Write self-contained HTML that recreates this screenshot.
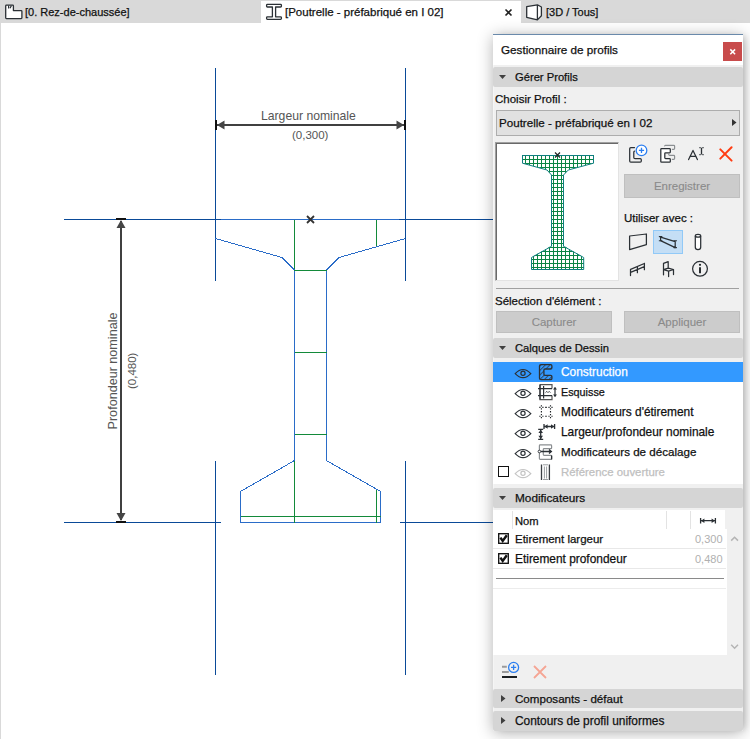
<!DOCTYPE html>
<html><head><meta charset="utf-8">
<style>
*{margin:0;padding:0;box-sizing:border-box}
html,body{width:750px;height:739px;overflow:hidden;background:#fff;font-family:"Liberation Sans",sans-serif;font-size:12px;color:#111}
.a{position:absolute}
.t{position:absolute;white-space:nowrap;line-height:14px;font-size:12px;-webkit-text-stroke:0.25px currentColor}
svg{position:absolute;left:0;top:0}
</style></head><body>
<!-- tab bar -->
<div class="a" style="left:0;top:0;width:750px;height:23px;background:#d9d9d9"></div>
<div class="a" style="left:261px;top:1px;width:260px;height:22px;background:#fff"></div>
<div class="a" style="left:0;top:23px;width:1px;height:716px;background:#d9d9d9"></div>
<div class="t" style="left:25px;top:5px;font-size:11px">[0. Rez-de-chaussée]</div>
<div class="t" style="left:285px;top:5px;font-size:11.5px">[Poutrelle - préfabriqué en I 02]</div>
<div class="t" style="left:546px;top:5px;font-size:11px">[3D / Tous]</div>


<!-- tab icons -->
<svg class="a" style="left:0;top:0" width="550" height="23">
 <g fill="#fff" stroke="#2b3035" stroke-width="1.3" stroke-linejoin="round">
  <path d="M6.4 5.2Q5.7 5.2 5.7 5.9V17.8Q5.7 18.6 6.4 18.6H21.2Q21.9 18.6 21.9 17.8V11.4Q21.9 10.6 21.2 10.6H13.4V5.9Q13.4 5.2 12.7 5.2Z"/>
  <path d="M267.4 4.4H280.6Q281.4 4.4 281.4 5.2V6.2Q281.4 7 280.6 7H275.6V16.8H280.6Q281.4 16.8 281.4 17.6V18.6Q281.4 19.4 280.6 19.4H267.4Q266.6 19.4 266.6 18.6V17.6Q266.6 16.8 267.4 16.8H272.4V7H267.4Q266.6 7 266.6 6.2V5.2Q266.6 4.4 267.4 4.4Z"/>
  <path d="M526.7 6.6L537.4 4.8L541.4 7V15.8L537.4 19.9L526.7 17.3Z M537.4 4.8V19.9"/>
 </g>
 <path d="M8.6 5.5V8.6M11.4 5.6L10 8.2" stroke="#2b3035" stroke-width="1.2" fill="none"/>
 <path d="M505.5 9.5L511.5 15.5M511.5 9.5L505.5 15.5" stroke="#222" stroke-width="1.6"/>
</svg>

<!-- drawing -->
<svg width="750" height="739" viewBox="0 0 750 739">
 <g fill="none" stroke-width="1" shape-rendering="crispEdges">
  <!-- beam outline -->
  <g stroke="#2a6cc8">
   <path d="M215.5 219.5H405.5V238.5M215.5 219.5V238.5M326.5 269.5V460.5M294.5 269.5V460.5M380.5 490.5V522.5H240.5V490.5"/>
  </g>
  <g stroke="#138a3a">
   <path d="M294.5 219.5V270.5H326.5M376.5 219.5V246.5M294.5 352.5H326.5M294.5 434.5H326.5M294.5 460.5V522.5M240.5 516.5H380.5M376.5 489.5V522.5"/>
  </g>
  <g stroke="#0a4a98">
   <path d="M215.5 68V281M215.5 461V675M405.5 68V281M405.5 461V675M64 219.5H221M399 219.5H493M64 522.5H221M400 522.5H493"/>
  </g>
  <g stroke="#404040" stroke-width="2">
   <path d="M217 125H404M121 221V520"/>
  </g>
 </g>
 <g fill="none" stroke="#2a6cc8" stroke-width="1" shape-rendering="crispEdges">
  <path d="M215.5 238.5L282 257.5L294.5 270M405.5 238.5L339 257.5L326.5 270M294.5 460.5L240.5 491.5M326.5 460.5L380.5 491.5"/>
 </g>
 <!-- arrowheads -->
 <g fill="#454545">
  <path d="M217 125L224.5 120.5V129.5Z M404 125L396.5 120.5V129.5Z M121 220L116.5 228H125.5Z M121 521L116.5 513H125.5Z"/>
 </g>
 <g fill="#111">
  <rect x="215" y="120" width="2" height="10"/><rect x="404" y="120" width="2" height="10"/>
  <rect x="116" y="218" width="10" height="2"/><rect x="116" y="521" width="10" height="2"/>
 </g>
 <!-- center mark -->
 <g stroke="#333" stroke-width="1.8">
  <path d="M307 216L314 223M314 216L307 223"/>
 </g>
</svg>
<div class="t" style="left:261px;top:109px;color:#555;font-size:12.2px;-webkit-text-stroke:0">Largeur nominale</div>
<div class="t" style="left:292px;top:128px;color:#555;font-size:11.5px;-webkit-text-stroke:0">(0,300)</div>
<div class="t" style="left:54px;top:364px;width:117px;text-align:center;color:#555;font-size:12.6px;-webkit-text-stroke:0;transform:rotate(-90deg)">Profondeur nominale</div>
<div class="t" style="left:114px;top:364px;width:36px;text-align:center;color:#555;font-size:11.5px;-webkit-text-stroke:0;transform:rotate(-90deg)">(0,480)</div>

<!-- panel -->
<div class="a" style="left:493px;top:34px;width:250px;height:697px;background:#f0f0f0;box-shadow:0 2px 15px rgba(0,0,0,0.3),4px 0 6px -2px rgba(0,0,0,0.14)"></div>
<div class="a" style="left:493px;top:65px;width:1px;height:666px;background:#f5f5f5"></div>
<div class="a" style="left:493px;top:34px;width:250px;height:1px;background:#6a8aab"></div>
<div class="a" style="left:493px;top:35px;width:250px;height:30px;background:#fff"></div>
<div class="t" style="left:501px;top:43px;font-size:11.7px">Gestionnaire de profils</div>

<div class="a" style="left:723px;top:42px;width:19px;height:19px;background:#c84b4b"></div>
<svg class="a" style="left:723px;top:42px" width="19" height="19"><path d="M7.3 7.4L12.1 12.2M12.1 7.4L7.3 12.2" stroke="#fff" stroke-width="1.5"/></svg>

<!-- Gerer Profils header -->
<div class="a" style="left:493px;top:67px;width:250px;height:20px;background:#d5d5d5;border-radius:2px"></div>
<svg class="a" style="left:499px;top:75px" width="8" height="5"><path d="M0 0H7L3.5 4Z" fill="#404040"/></svg>
<div class="t" style="left:515px;top:70px;font-size:11.2px">Gérer Profils</div>
<div class="t" style="left:495px;top:92px;font-size:11.5px">Choisir Profil :</div>
<!-- dropdown -->
<div class="a" style="left:496px;top:110px;width:244px;height:26px;background:#e1e1e1;border:1px solid #adadad"></div>
<div class="t" style="left:499px;top:116px;font-size:11.6px">Poutrelle - préfabriqué en I 02</div>
<svg class="a" style="left:732px;top:119px" width="6" height="8"><path d="M0 0L4.5 3.5L0 7Z" fill="#333"/></svg>
<!-- preview -->
<div class="a" style="left:495px;top:142px;width:124px;height:139px;background:#fff;border-top:1px solid #a0a0a0;border-left:1px solid #a0a0a0;border-right:1px solid #e3e3e3;border-bottom:1px solid #e3e3e3;box-shadow:inset 1px 1px 0 #696969"></div>


<svg class="a" style="left:0;top:0" width="750" height="300">
 <defs>
  <pattern id="grid" patternUnits="userSpaceOnUse" x="1" y="3" width="4" height="4">
   <rect x="0" y="0" width="4" height="1" fill="#0b8444"/><rect x="0" y="0" width="1" height="4" fill="#0b8444"/>
  </pattern>
  <clipPath id="bclip"><path d="M522 155H594V163L568.3 169.8L564 174.5V246L584 257.5V270H531V257.5L551 246V174.5L547 169.8L522 163Z"/></clipPath>
 </defs>
 <rect x="520" y="150" width="80" height="125" fill="url(#grid)" clip-path="url(#bclip)"/>
 <path d="M522.5 155.5H593.5V163.2L568.3 170L563.5 175V246.3L583.7 257.5V269.5H531.5V257.5L551.5 246.3V175L547 170L522.5 163.2Z" fill="none" stroke="#0f7f80" stroke-width="1"/>
 <path d="M555 152.5L560 157.5M560 152.5L555 157.5" stroke="#222" stroke-width="1.2"/>
</svg>

<!-- Enregistrer -->
<div class="a" style="left:624px;top:174px;width:116px;height:24px;background:#cccccc;border:1px solid #bfbfbf"></div>
<div class="t" style="left:624px;top:179px;width:116px;text-align:center;color:#8a8a8a;font-size:11.5px;-webkit-text-stroke:0.1px #8a8a8a">Enregistrer</div>
<div class="t" style="left:624px;top:211px;font-size:11.5px">Utiliser avec :</div>
<div class="a" style="left:653px;top:230px;width:30px;height:24px;background:#c4def5;border:1px solid #91c9f7"></div>

<!-- toolbar icons -->
<svg class="a" style="left:0;top:0" width="750" height="290">
 <g fill="none" stroke="#2b3035" stroke-width="1.25" stroke-linejoin="round" stroke-linecap="round">
  <path d="M634.5 147.6H630.8Q629.7 147.6 629.7 148.7V161Q629.7 162.2 630.8 162.2H640.2Q641.3 162.2 641.3 161V159.8Q641.3 158.6 640.2 158.6H635Q633.8 158.6 633.8 157.4V152.2Q633.8 151.2 634.6 151.1"/>
  <path d="M661.6 148.7H669.5Q670.3 148.7 670.3 149.5V152Q670.3 152.8 669.5 152.8H665.6Q664.8 152.8 664.8 153.6V157.8Q664.8 158.6 665.6 158.6H669.5Q670.3 158.6 670.3 159.4V161.4Q670.3 162.2 669.5 162.2H661.6Q660.8 162.2 660.8 161.4V149.5Q660.8 148.7 661.6 148.7Z" fill="#fff"/>
  <path d="M688.6 159.6L693 150.4L697.4 159.6M689.9 156.4H696.1"/>
  <path d="M701.5 147.8V154.4M699.4 147.6H700.6M702.4 147.6H703.6M699.4 154.6H700.6M702.4 154.6H703.6" stroke-linecap="butt" stroke-width="1.3"/>
 </g>
 <path d="M664.7 145.9Q664.9 145.3 665.6 145.3H673.8Q674.6 145.3 674.6 146.1V148.5Q674.6 149.3 673.8 149.3H672.4M668.7 154.4Q668.9 155.4 669.7 155.4H673.8Q674.6 155.4 674.6 156.2V158.6Q674.6 159.4 673.8 159.4H672.4" fill="none" stroke="#8b8f92" stroke-width="1.2" stroke-linecap="round"/>
 <circle cx="641.5" cy="150.4" r="5.3" fill="#fff" stroke="#2c7ff0" stroke-width="1.3"/>
 <path d="M638.9 150.4H644.1M641.5 147.8V153" stroke="#2c7ff0" stroke-width="1.3"/>
 <path d="M720.3 149.4L731.6 160.6M720.3 158.6L731.6 147.3" stroke="#ff3c12" stroke-width="2" stroke-linecap="round"/>
 <!-- use-with icons -->
 <g fill="none" stroke="#2b3035" stroke-width="1.25" stroke-linejoin="round" stroke-linecap="round">
  <path d="M629.6 236L646.4 234V244.6L629.6 249.6Z"/>
  <path d="M660.6 237.2L675.2 241.6V247.6L660.6 240.6Z"/>
  <path d="M659.3 236.6H661.9M659.3 240.8H661.9M673.9 240.8H676.5M673.9 247.6H676.5" stroke-width="1.1"/>
  <path d="M695.3 236.3V247.2Q695.3 249.6 698 249.6Q700.7 249.6 700.7 247.2V236.3" fill="#fff"/>
  <ellipse cx="698" cy="235.8" rx="2.7" ry="1.4" fill="#fff"/>
  <path d="M630.5 275.6V269.3M637.4 272.7V266.5M644.4 269.7V263.3M630.6 269.4L644.3 263.5M630.6 272.4L644.3 266.6"/>
  <path d="M663.5 274.8V263.4L668.2 261.6V268.2M663.5 269.6L668.3 268.2L673.5 269.5L668.6 271.1ZM668.6 271.1V276.6M673.5 269.5V274.6"/>
  <circle cx="700" cy="268.8" r="7.4"/>
 </g>
 <path d="M700 267.3V273.3" stroke="#1e2326" stroke-width="1.9"/>
 <circle cx="700" cy="264.8" r="1.1" fill="#1e2326"/>
</svg>

<!-- separator -->
<div class="a" style="left:496px;top:288px;width:243px;height:1px;background:#a0a0a0"></div>
<div class="t" style="left:495px;top:294px;font-size:11.5px">Sélection d'élément :</div>
<div class="a" style="left:496px;top:311px;width:116px;height:22px;background:#cccccc;border:1px solid #bfbfbf"></div>
<div class="t" style="left:496px;top:315px;width:116px;text-align:center;color:#8a8a8a;font-size:11.5px;-webkit-text-stroke:0.1px #8a8a8a">Capturer</div>
<div class="a" style="left:624px;top:311px;width:116px;height:22px;background:#cccccc;border:1px solid #bfbfbf"></div>
<div class="t" style="left:624px;top:315px;width:116px;text-align:center;color:#8a8a8a;font-size:11.5px;-webkit-text-stroke:0.1px #8a8a8a">Appliquer</div>

<!-- Calques header -->
<div class="a" style="left:493px;top:338px;width:250px;height:20px;background:#d5d5d5;border-radius:2px"></div>
<svg class="a" style="left:499px;top:346px" width="8" height="5"><path d="M0 0H7L3.5 4Z" fill="#404040"/></svg>
<div class="t" style="left:515px;top:341px;font-size:11.2px">Calques de Dessin</div>
<!-- list -->
<div class="a" style="left:493px;top:362px;width:250px;height:122px;background:#fff"></div>
<div class="a" style="left:493px;top:362px;width:250px;height:20px;background:#3399ff"></div>
<div class="t" style="left:561px;top:365px;color:#fff;font-size:11.9px">Construction</div>
<div class="t" style="left:561px;top:385px;font-size:10.8px">Esquisse</div>
<div class="t" style="left:561px;top:405px;font-size:11.9px">Modificateurs d'étirement</div>
<div class="t" style="left:561px;top:425px;font-size:11.9px">Largeur/profondeur nominale</div>
<div class="t" style="left:561px;top:445px;font-size:11.6px">Modificateurs de décalage</div>
<div class="t" style="left:561px;top:465px;color:#c0c0c0;font-size:11.4px">Référence ouverture</div>
<div class="a" style="left:498px;top:466px;width:11px;height:11px;border:1.5px solid #111;background:#fff"></div>


<!-- layer icons -->
<svg class="a" style="left:0;top:0;z-index:5" width="750" height="739">
 <g fill="none" stroke="#2b3035" stroke-width="1.2">
  <g id="eye"><path d="M515.2 373.6Q523 365.4 530.8 373.6Q523 381.8 515.2 373.6Z"/><circle cx="523" cy="373.2" r="2.1"/></g>
  <path d="M515.2 393.6Q523 385.4 530.8 393.6Q523 401.8 515.2 393.6Z"/><circle cx="523" cy="393.2" r="2.1"/>
  <path d="M515.2 413.6Q523 405.4 530.8 413.6Q523 421.8 515.2 413.6Z"/><circle cx="523" cy="413.2" r="2.1"/>
  <path d="M515.2 433.6Q523 425.4 530.8 433.6Q523 441.8 515.2 433.6Z"/><circle cx="523" cy="433.2" r="2.1"/>
  <path d="M515.2 453.6Q523 445.4 530.8 453.6Q523 461.8 515.2 453.6Z"/><circle cx="523" cy="453.2" r="2.1"/>
 </g>
 <g fill="none" stroke="#c4c4c4" stroke-width="1.2">
  <path d="M515.2 473.6Q523 465.4 530.8 473.6Q523 481.8 515.2 473.6Z"/><circle cx="523" cy="473.2" r="2.1"/>
 </g>
 <!-- construction C -->
 <defs>
  <pattern id="hatch" patternUnits="userSpaceOnUse" width="3.2" height="4" patternTransform="rotate(45)">
   <rect x="0" y="0" width="1" height="4" fill="#2b3035"/>
  </pattern>
 </defs>
 <path d="M541 364.6H550.6Q551.9 364.6 551.9 365.9V367.7Q551.9 369 550.6 369H545Q543.9 369 543.9 370.1V374.2Q543.9 375.3 545 375.3H550.6Q551.9 375.3 551.9 376.6V378.4Q551.9 379.7 550.6 379.7H541Q539.5 379.7 539.5 378.2V366.1Q539.5 364.6 541 364.6Z" fill="url(#hatch)" fill-opacity="0.75" stroke="#2b3035" stroke-width="1.3"/>
 <!-- esquisse -->
 <g fill="none" stroke="#2b3035" stroke-width="1.2">
  <path d="M540 384.6H552V388.6M552 395.6V399.6H540V384.6" stroke="#555"/>
  <path d="M538 388.6H552M538 395.6H552M540 384.6V399.6M543.6 386V398.4"/>
  <path d="M545.5 392.6L546.8 391.4L548 392.6L549.2 391.4L550.4 392.6" stroke-width="0.9"/>
  <path d="M555 387.6V396.4"/>
 </g>
 <path d="M553 389.4L555 387L557 389.4ZM553 394.6L555 397L557 394.6Z" fill="#2b3035"/>
 <!-- modif etirement -->
 <g stroke="#1f2326" stroke-width="1.15" fill="none">
  <path d="M541.4 405.2V406.4M541.4 408.2V409.4M539.3 407.3H540.5M542.3 407.3H543.5M550.5 405.2V406.4M550.5 408.2V409.4M548.4 407.3H549.6M551.4 407.3H552.6M541.4 414.1V415.3M541.4 417.1V418.3M539.3 416.2H540.5M542.3 416.2H543.5M550.5 414.1V415.3M550.5 417.1V418.3M548.4 416.2H549.6M551.4 416.2H552.6"/>
  <path d="M545.2 407.3H546.8M545.2 416.2H546.8M541.4 411V412.6M550.5 411V412.6"/>
 </g>
 <!-- largeur/profondeur -->
 <g stroke="#2b3035" stroke-width="1.3" fill="none">
  <path d="M544 424V429M554.6 424V429M544 426.5H554.6M538.2 429.3H543.2M540.7 429.3V439.2M538.2 439.4H543.2"/>
 </g>
 <path d="M544.5 426.5L547.6 424.2V428.8ZM554.1 426.5L551 424.2V428.8ZM540.7 429.8L538.4 433H543ZM540.7 439L538.4 435.8H543Z" fill="#2b3035"/>
 <!-- decalage -->
 <path d="M540.2 444.9H550.8Q551.6 444.9 551.6 445.7V447.9Q551.6 448.7 550.8 448.7H544.1Q543.3 448.7 543.3 449.5V454.6Q543.3 455.4 544.1 455.4H550.8Q551.6 455.4 551.6 456.2V458.5Q551.6 459.3 550.8 459.3H540.2Q539.4 459.3 539.4 458.5V445.7Q539.4 444.9 540.2 444.9Z" fill="none" stroke="#8a8e91" stroke-width="1.2"/>
 <path d="M540.6 451.5H551.2M549 449.4L551.4 451.5L549 453.6M551.6 455.6V459.6" fill="none" stroke="#2b3035" stroke-width="1.3"/>
 <circle cx="539.4" cy="451.5" r="1.3" fill="#fff" stroke="#2b3035" stroke-width="0.9"/>
 <!-- reference ouverture -->
 <path d="M541.5 464.5V480M549.4 464.5V480" stroke="#3a3f43" stroke-width="1.3" fill="none"/>
 <path d="M544.4 466.5V478.5M546.6 466.5V478.5M543 464.8H548M543 479.5H548" stroke="#9a9ea1" stroke-width="1" fill="none"/>
 <!-- table checkboxes -->
 <rect x="498.7" y="533.7" width="9.6" height="9.6" fill="#fff" stroke="#111" stroke-width="1.35"/>
 <path d="M500.4 537.6L502.7 541L506.8 535.2" fill="none" stroke="#111" stroke-width="2.4"/>
 <rect x="498.7" y="553.7" width="9.6" height="9.6" fill="#fff" stroke="#111" stroke-width="1.35"/>
 <path d="M500.4 557.6L502.7 561L506.8 555.2" fill="none" stroke="#111" stroke-width="2.4"/>
 <!-- header arrow -->
 <path d="M700.6 518V523.4M715.4 518V523.4M701 520.7H715" stroke="#2b3035" stroke-width="1.3" fill="none"/>
 <path d="M701 520.7L704.4 518.4V523ZM715 520.7L711.6 518.4V523Z" fill="#2b3035"/>
 <!-- scroll chevrons -->
 <path d="M731.2 540.6L734.6 537.2L738 540.6" fill="none" stroke="#b4b4b4" stroke-width="1.5"/>
 <path d="M731.2 644.8L734.6 648.2L738 644.8" fill="none" stroke="#b4b4b4" stroke-width="1.5"/>
 <!-- bottom toolbar -->
 <path d="M502 666.8H506.8M502 672H508.8" stroke="#9a9a9a" stroke-width="2"/>
 <path d="M502 677H517" stroke="#1b1f22" stroke-width="2"/>
 <circle cx="513.6" cy="667.4" r="5" fill="#f0f0f0" stroke="#2c7ff0" stroke-width="1.3"/>
 <path d="M511 667.4H516.2M513.6 664.8V670" stroke="#2c7ff0" stroke-width="1.3"/>
 <path d="M534 666L546 678M534 678L546 666" stroke="#f5a594" stroke-width="1.8"/>
</svg>

<!-- Modificateurs header -->
<div class="a" style="left:493px;top:488px;width:250px;height:20px;background:#d5d5d5;border-radius:2px"></div>
<svg class="a" style="left:499px;top:496px" width="8" height="5"><path d="M0 0H7L3.5 4Z" fill="#404040"/></svg>
<div class="t" style="left:515px;top:491px;font-size:11.8px">Modificateurs</div>
<!-- table -->
<div class="a" style="left:493px;top:510px;width:234px;height:145px;background:#fff"></div>
<div class="a" style="left:512px;top:511px;width:1px;height:18px;background:#e3e3e3"></div>
<div class="a" style="left:666px;top:511px;width:1px;height:18px;background:#e3e3e3"></div>
<div class="a" style="left:690px;top:511px;width:1px;height:18px;background:#e3e3e3"></div>
<div class="a" style="left:725px;top:510px;width:2px;height:19px;background:#f0f0f0"></div>
<div class="t" style="left:515px;top:514px;font-size:11.2px">Nom</div>
<div class="t" style="left:515px;top:532px;font-size:11.5px">Etirement largeur</div>
<div class="t" style="left:515px;top:552px;font-size:11.9px">Etirement profondeur</div>
<div class="t" style="left:695px;top:532px;color:#b0b0b0;font-size:11px;-webkit-text-stroke:0">0,300</div>
<div class="t" style="left:695px;top:552px;color:#b0b0b0;font-size:11px;-webkit-text-stroke:0">0,480</div>
<div class="a" style="left:493px;top:548px;width:233px;height:1px;background:#e8e8e8"></div>
<div class="a" style="left:493px;top:568px;width:233px;height:1px;background:#e8e8e8"></div>
<div class="a" style="left:496px;top:578px;width:228px;height:1px;background:#8a8a8a"></div>
<div class="a" style="left:493px;top:588px;width:233px;height:1px;background:#ececec"></div>

<!-- bottom headers -->
<div class="a" style="left:493px;top:689px;width:250px;height:19px;background:#d5d5d5;border-radius:2px"></div>
<svg class="a" style="left:501px;top:695px" width="5" height="8"><path d="M0 0L4.5 3.5L0 7Z" fill="#404040"/></svg>
<div class="t" style="left:515px;top:692px;font-size:11.6px">Composants - défaut</div>
<div class="a" style="left:493px;top:711px;width:250px;height:20px;background:#d5d5d5;border-radius:2px"></div>
<svg class="a" style="left:501px;top:717px" width="5" height="8"><path d="M0 0L4.5 3.5L0 7Z" fill="#404040"/></svg>
<div class="t" style="left:515px;top:714px;font-size:11.9px">Contours de profil uniformes</div>

</body></html>
